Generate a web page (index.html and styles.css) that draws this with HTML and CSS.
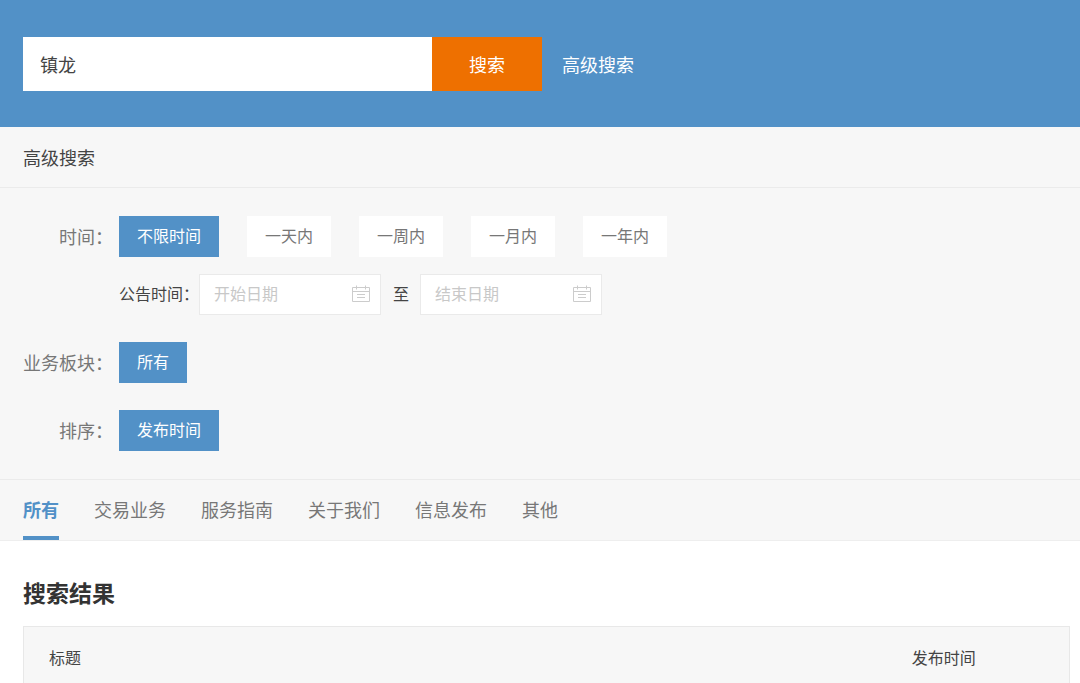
FILE: index.html
```
<!DOCTYPE html>
<html lang="zh-CN">
<head>
<meta charset="utf-8">
<meta name="viewport" content="width=device-width, initial-scale=1">
<title>高级搜索</title>
<link rel="stylesheet" href="styles.css">
</head>
<body>
<header class="banner">
  <form class="search" role="search">
    <input class="search-input" type="text" aria-label="搜索关键词" value="镇龙">
    <button class="search-button" type="button">搜索</button>
  </form>
  <a class="advanced-link" href="#advanced">高级搜索</a>
</header>
<main>
  <section class="panel" id="advanced">
    <h2 class="panel-title">高级搜索</h2>
    <div class="filters">
      <div class="filter">
        <span class="filter-label">时间：</span>
        <div class="filter-body">
          <div class="options">
            <button class="option option-active" type="button">不限时间</button>
            <button class="option" type="button">一天内</button>
            <button class="option" type="button">一周内</button>
            <button class="option" type="button">一月内</button>
            <button class="option" type="button">一年内</button>
          </div>
          <div class="dates">
            <label class="date-label" for="date-start">公告时间：</label>
            <div class="date-field">
              <input class="date-input" id="date-start" type="text" placeholder="开始日期">
              <svg class="date-icon" viewBox="0 0 20 18" aria-hidden="true"><path d="M1.5 2.5h17v14h-17zM1.5 6.5h17M5.5 0.5v4M14.5 0.5v4M6 9.5h8M6 12.5h8"/></svg>
            </div>
            <label class="date-label date-separator" for="date-end">至</label>
            <div class="date-field">
              <input class="date-input" id="date-end" type="text" placeholder="结束日期">
              <svg class="date-icon" viewBox="0 0 20 18" aria-hidden="true"><path d="M1.5 2.5h17v14h-17zM1.5 6.5h17M5.5 0.5v4M14.5 0.5v4M6 9.5h8M6 12.5h8"/></svg>
            </div>
          </div>
        </div>
      </div>
      <div class="filter">
        <span class="filter-label">业务板块：</span>
        <div class="options"><button class="option option-active" type="button">所有</button></div>
      </div>
      <div class="filter">
        <span class="filter-label">排序：</span>
        <div class="options"><button class="option option-active" type="button">发布时间</button></div>
      </div>
    </div>
    <nav class="tabs">
      <a class="tab tab-active" href="#all">所有</a>
      <a class="tab" href="#trade">交易业务</a>
      <a class="tab" href="#guide">服务指南</a>
      <a class="tab" href="#about">关于我们</a>
      <a class="tab" href="#news">信息发布</a>
      <a class="tab" href="#other">其他</a>
    </nav>
  </section>
  <section class="results">
    <h1 class="results-title">搜索结果</h1>
    <table class="results-table">
      <thead>
        <tr><th class="col-title" scope="col">标题</th><th class="col-date" scope="col">发布时间</th></tr>
      </thead>
    </table>
  </section>
</main>
</body>
</html>
```
FILE: styles.css
```
* {
  box-sizing: border-box;
}

body {
  margin: 0;
  background: #fff;
  color: #444;
  font-family: "Noto Sans CJK SC", sans-serif;
  font-size: 16px;
  line-height: 24px;
}

input,
button {
  font: inherit;
  border: 0;
  border-radius: 0;
}

a {
  text-decoration: none;
}

.banner {
  display: flex;
  align-items: center;
  gap: 20px;
  padding: 37px 23px 36px;
  background: #5291c7;
  font-size: 18px;
}

.search {
  display: flex;
  flex: 0 1 519px;
  height: 54px;
}

.search-input {
  flex: 1;
  min-width: 0;
  padding: 0 17px;
  background: #fff;
  color: #444;
}

.search-button {
  flex: none;
  padding: 0 37px;
  background: #ee7000;
  color: #fff;
}

.advanced-link {
  color: #fff;
}

.panel {
  background: #f7f7f7;
  border-bottom: 1px solid #eee;
}

.panel-title {
  margin: 0;
  padding: 18px 23px;
  border-bottom: 1px solid #ebebeb;
  font-size: 18px;
  font-weight: 400;
}

.filters {
  display: grid;
  gap: 27px;
  padding: 28px 23px;
}

.filter {
  display: flex;
  gap: 6px;
}

.filter-label {
  flex: 0 0 90px;
  color: #777;
  font-size: 18px;
  line-height: 41px;
  text-align: right;
}

.filter-body {
  display: grid;
  gap: 17px;
}

.options {
  display: flex;
  gap: 28px;
}

.option {
  height: 41px;
  padding: 0 18px 3px;
  background: #fff;
  color: #777;
}

.option-active {
  background: #5291c7;
  color: #fff;
}

.dates {
  display: flex;
  align-items: center;
}

.date-label {
  padding-bottom: 3px;
}

.date-separator {
  padding-left: 12px;
  padding-right: 11px;
}

.date-field {
  position: relative;
}

.date-input {
  display: block;
  width: 182px;
  height: 41px;
  padding: 0 40px 3px 14px;
  background: #fff;
  border: 1px solid #eaeaea;
}

.date-input::placeholder {
  color: #c8c8c8;
  opacity: 1;
}

.date-icon {
  position: absolute;
  top: 11px;
  right: 10px;
  width: 20px;
  height: 18px;
  fill: none;
  stroke: #ccc;
}

.tabs {
  display: flex;
  gap: 35px;
  padding: 0 23px;
  border-top: 1px solid #ebebeb;
  font-size: 18px;
}

.tab {
  padding: 17px 0 15px;
  border-bottom: 4px solid transparent;
  color: #777;
}

.tab-active {
  border-bottom-color: #5291c7;
  color: #5291c7;
  font-weight: 700;
}

.results {
  padding: 35px 10px 0 23px;
}

.results-title {
  margin: 0 0 18px;
  color: #333;
  font-size: 23px;
  line-height: 32px;
}

.results-table {
  width: 100%;
  border: 1px solid #e8e8e8;
  border-collapse: collapse;
  background: #f7f7f7;
}

.results-table th {
  padding: 18px 25px;
  font-weight: 400;
}

.results-table .col-title {
  text-align: left;
}

.col-date {
  width: 24%;
}
```
